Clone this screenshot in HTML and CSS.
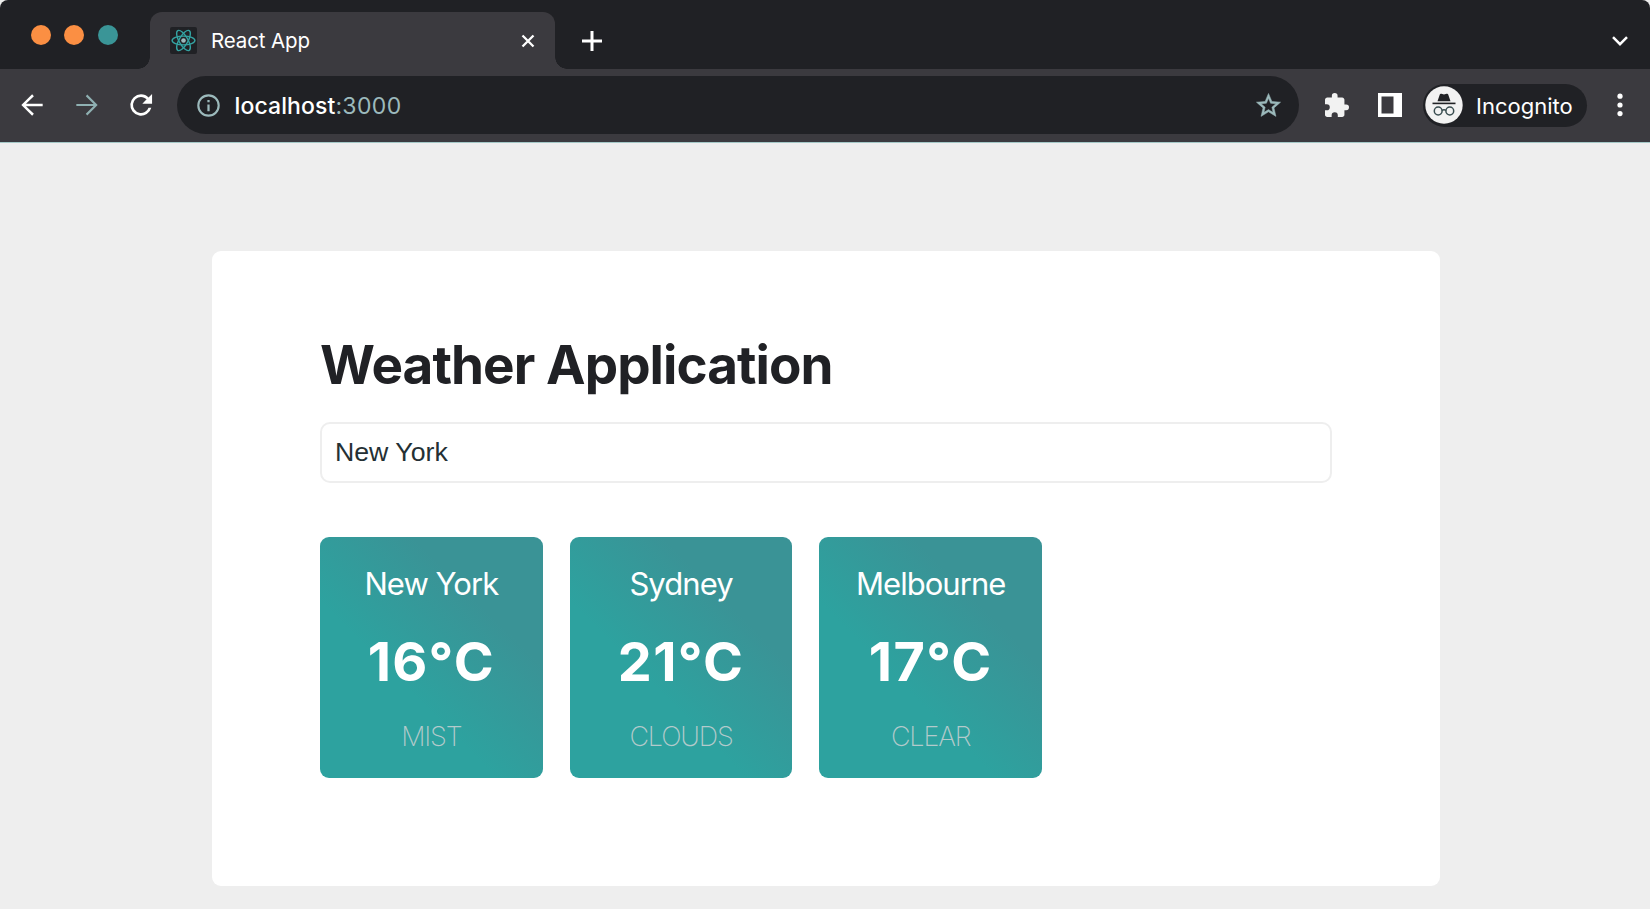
FILE: index.html
```html
<!DOCTYPE html>
<html lang="en">
<head>
<meta charset="utf-8">
<title>React App</title>
<link rel="stylesheet" href="styles.css">
</head>
<body>
<div class="browser">
  <header class="tabstrip">
    <div class="lights"><i class="light"></i><i class="light"></i><i class="light light-green"></i></div>
    <div class="tab">
      <svg class="favicon" viewBox="0 0 27 27">
        <rect width="27" height="27" rx="2" fill="#202125"/>
        <g fill="none" stroke="#34a3a2" stroke-width="1.4">
          <ellipse cx="13.5" cy="13.5" rx="11.4" ry="4.4"/>
          <ellipse cx="13.5" cy="13.5" rx="11.4" ry="4.4" transform="rotate(60 13.5 13.5)"/>
          <ellipse cx="13.5" cy="13.5" rx="11.4" ry="4.4" transform="rotate(120 13.5 13.5)"/>
        </g>
        <circle cx="13.5" cy="13.5" r="2.3" fill="#9cbabc"/>
      </svg>
      <span class="tab-title">React App</span>
      <svg class="tab-close" viewBox="0 0 14 14"><path d="M1.5 1.5l11 11M12.5 1.5l-11 11" stroke="#fff" stroke-width="2.3"/></svg>
    </div>
    <svg class="new-tab" viewBox="0 0 20 20"><path d="M10 0v20M0 10h20" stroke="#fff" stroke-width="3"/></svg>
    <svg class="chevron" viewBox="0 0 16 10"><path d="M1 1.2l7 7 7-7" fill="none" stroke="#fff" stroke-width="2.5"/></svg>
  </header>
  <nav class="toolbar">
    <svg class="nav-icon" viewBox="0 0 24 24"><path fill="#fff" d="M20 11.1H7.5l5.9-5.75L12.1 4 4 12l8.1 8 1.3-1.35L7.5 12.9H20z"/></svg>
    <svg class="nav-icon" viewBox="0 0 24 24"><path fill="#8fb0b2" d="M4 11.3H17l-5.9-5.95L12.2 4.1 20 12l-7.8 7.9-1.1-1.25 5.9-5.95H4z"/></svg>
    <svg class="nav-icon" viewBox="0 0 24 24"><path fill="#fff" d="M17.65 6.35A7.96 7.96 0 0 0 12 4a8 8 0 1 0 7.73 10h-2.08A6 6 0 1 1 12 6c1.66 0 3.14.69 4.22 1.78L13 11h7.3V3.7z"/></svg>
    <div class="address">
      <svg class="info" viewBox="0 0 24 24"><path fill="#9cbabc" d="M11 7h2v2h-2zm0 4h2v6h-2zm1-9a10 10 0 1 0 0 20 10 10 0 0 0 0-20zm0 18.1a8.1 8.1 0 1 1 0-16.2 8.1 8.1 0 0 1 0 16.2z"/></svg>
      <span class="url"><span class="host">localhost</span><span class="port">:3000</span></span>
      <svg class="star" viewBox="0 0 24 24"><path fill="#9cbabc" stroke="#9cbabc" stroke-width=".4" d="M22 9.24l-7.19-.62L12 2 9.19 8.63 2 9.24l5.46 4.73L5.82 21 12 17.27 18.18 21l-1.63-7.03L22 9.24zM12 15.4l-3.76 2.27 1-4.28-3.32-2.88 4.38-.38L12 6.1l1.71 4.04 4.38.38-3.32 2.88 1 4.28L12 15.4z"/></svg>
    </div>
    <svg class="puzzle" viewBox="2 1 21 21"><path fill="#f2f2f2" d="M20.5 11H19V7c0-1.1-.9-2-2-2h-4V3.5a2.5 2.5 0 0 0-5 0V5H4c-1.1 0-2 .9-2 2v3.8h1.5a2.7 2.7 0 0 1 0 5.4H2V20c0 1.1.9 2 2 2h3.8v-1.5a2.7 2.7 0 0 1 5.4 0V22H17c1.1 0 2-.9 2-2v-4h1.5a2.5 2.5 0 0 0 0-5z"/></svg>
    <svg class="panel" viewBox="0 0 24 24"><path fill="#fff" fill-rule="evenodd" d="M0 0h24v24H0zM3.5 3.5v17h12v-17z"/></svg>
    <div class="profile">
      <svg class="avatar" viewBox="0 0 38 38">
        <circle cx="19" cy="19" r="18.7" fill="#f2f2f2"/>
        <g fill="#202125">
          <path d="M12.5 15.2l2.3-6.7c.3-.8.9-1 1.6-.7l2.6.7 2.6-.7c.7-.3 1.3-.1 1.6.7l2.3 6.7z"/>
          <rect x="7.5" y="16.6" width="23" height="1.6"/>
        </g>
        <g fill="none" stroke="#394d50" stroke-width="1.5">
          <circle cx="13.2" cy="25" r="3.9"/><circle cx="24.8" cy="25" r="3.9"/>
          <path d="M16.9 24.5c1.3-.9 2.9-.9 4.2 0"/>
        </g>
      </svg>
      <span class="profile-name">Incognito</span>
    </div>
    <svg class="kebab" viewBox="0 0 6 24"><g fill="#fff"><circle cx="3" cy="3.2" r="2.6"/><circle cx="3" cy="12" r="2.6"/><circle cx="3" cy="20.6" r="2.6"/></g></svg>
  </nav>
  <main class="page">
    <section class="app">
      <h1 class="title">Weather Application</h1>
      <input class="search" type="text" value="New York">
      <div class="cards">
        <article class="card"><div class="city">New York</div><div class="temp">16°C</div><div class="desc">MIST</div></article>
        <article class="card"><div class="city">Sydney</div><div class="temp">21°C</div><div class="desc">CLOUDS</div></article>
        <article class="card"><div class="city">Melbourne</div><div class="temp">17°C</div><div class="desc">CLEAR</div></article>
      </div>
    </section>
  </main>
</div>
</body>
</html>
```

FILE: styles.css
```css
* { box-sizing: border-box; }
body { margin: 0; background: #eee; font-family: Inter, "Liberation Sans", sans-serif; overflow: hidden; }
svg { display: block; flex: none; }
.browser { width: 1650px; height: 909px; display: flex; flex-direction: column; background: #eee; }

.tabstrip { height: 69px; flex: none; display: flex; background: #202125; border-radius: 8px 8px 0 0; }
.lights { width: 150px; padding: 25px 0 0 30.5px; display: flex; gap: 13.7px; }
.light { width: 20px; height: 20px; flex: none; border-radius: 50%; background: #fb8f43; }
.light-green { background: #3a9597; }
.tab { position: relative; width: 405px; height: 57px; margin-top: 12px; padding: 0 20px; display: flex; align-items: center; background: #3b3a3f; border-radius: 12px 12px 0 0; }
.tab::before, .tab::after { content: ""; position: absolute; bottom: 0; width: 12px; height: 12px; }
.tab::before { left: -12px; background: radial-gradient(circle at 0 0, transparent 11.5px, #3b3a3f 12px); }
.tab::after { right: -12px; background: radial-gradient(circle at 100% 0, transparent 11.5px, #3b3a3f 12px); }
.favicon { width: 27px; height: 27px; }
.tab-title { margin-left: 14px; color: #fff; font-size: 20.5px; line-height: 24px; letter-spacing: -.12px; }
.tab-close { width: 14px; height: 14px; margin-left: auto; }
.new-tab { width: 20px; height: 20px; margin: 31px 0 0 27px; }
.chevron { width: 16px; height: 10px; margin: 36px 22px 0 auto; }

.toolbar { height: 74px; flex: none; display: flex; align-items: center; padding: 0 27px 1px 16px; background: #3b3a3f; border-bottom: 1px solid #a4c8c7; }
.nav-icon { width: 32px; height: 32px; margin-right: 22.5px; }
.address { width: 1122px; height: 58px; margin-left: -2.5px; padding: 0 16px 0 17.5px; display: flex; align-items: center; background: #202125; border-radius: 29px; }
.info { width: 27px; height: 27px; }
.url { margin-left: 13px; padding-top: 1px; font-size: 23px; line-height: 28px; color: #9cbabc; }
.host { color: #fff; font-weight: 500; letter-spacing: .1px; }
.port { letter-spacing: .35px; }
.star { width: 29px; height: 29px; margin-left: auto; }
.puzzle { width: 24px; height: 24px; margin-left: 25.5px; }
.panel { width: 24px; height: 24px; margin-left: 29.5px; }
.profile { width: 164px; height: 43px; margin-left: 21px; padding-left: 2px; display: flex; align-items: center; gap: 13px; color: #fff; font-size: 22px; background: #202125; border-radius: 22px; }
.profile-name { padding-top: 1px; }
.avatar { width: 38px; height: 38px; }
.kebab { width: 6px; height: 24px; margin-left: auto; }

.page { flex: 1; padding: 108px 210px 0 212px; }
.app { height: 635px; padding: 82px 108px 0; background: #fff; border-radius: 9px; }
.title { margin: 0; font-size: 53px; line-height: 64px; font-weight: 700; letter-spacing: -.93px; color: #202125; white-space: nowrap; }
.search { display: block; width: 1012px; height: 61px; margin-top: 25px; padding: 0 13px; border: 2px solid #eee; border-radius: 10px; background: #fff; outline: 0; font-family: "Liberation Sans", Arial, sans-serif; font-size: 26.7px; color: #243034; }
.cards { display: flex; gap: 27px; margin-top: 54px; }
.card { width: 222.7px; height: 241px; padding-top: 27px; border-radius: 9px; text-align: center; color: #fff; background: linear-gradient(45deg, #2da29f 38%, #3a9396 72%); }
.city { font-size: 31px; line-height: 40px; letter-spacing: -.95px; }
.temp { font-size: 54px; line-height: 64px; font-weight: 700; letter-spacing: 1.3px; margin-top: 26px; }
.desc { font-size: 27px; line-height: 34px; font-weight: 200; letter-spacing: -1.15px; margin-top: 26px; color: #b3cacb; }
```
